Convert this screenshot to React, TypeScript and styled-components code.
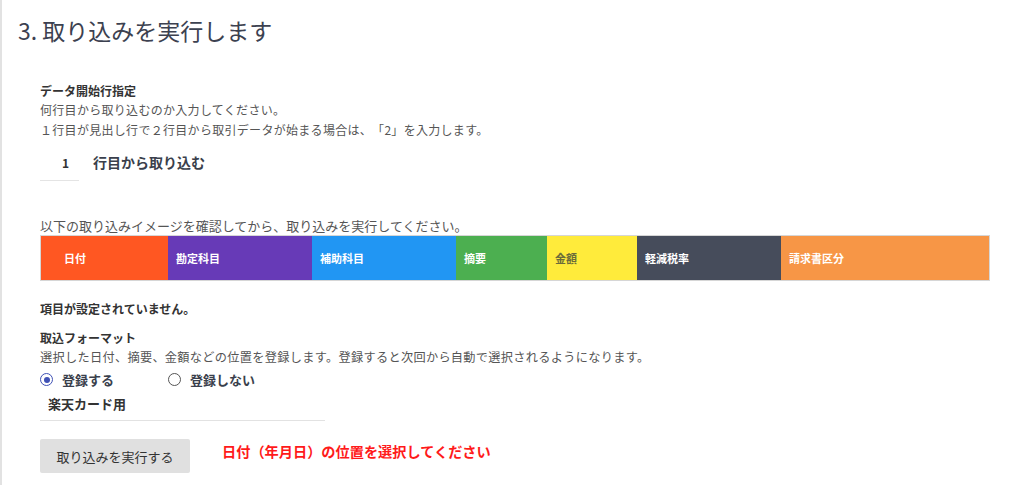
import { useState } from "react";
import styled, { createGlobalStyle } from "styled-components";

const GlobalStyle = createGlobalStyle`
  html, body {
    margin: 0;
    padding: 0;
    background: #ffffff;
  }
  body {
    font-family: "Noto Sans CJK JP", "Noto Sans", sans-serif;
    color: #333;
    text-spacing-trim: space-all;
  }
`;

const Page = styled.div`
  height: 485px;
  border-left: 2px solid #e2e2e2;
  box-sizing: border-box;
  padding: 14px 0 0 16px;
`;

const Title = styled.h1`
  margin: 0;
  font-size: 23px;
  font-weight: 400;
  color: #3c4150;
  line-height: 32px;
`;

const Body = styled.div`
  padding: 36px 0 0 22px;
  width: 950px;
`;

const Label = styled.div`
  font-size: 12px;
  font-weight: 700;
  color: #333;
  line-height: 18px;
`;

const Help = styled.div`
  font-size: 12px;
  letter-spacing: 0.3px;
  color: #555;
  line-height: 20px;
`;

const StartRow = styled.div`
  display: flex;
  align-items: flex-start;
  gap: 14px;
  margin-top: 2px;
`;

const SmallInput = styled.input`
  width: 39px;
  box-sizing: border-box;
  border: none;
  border-bottom: 1px solid #e4e4e4;
  padding: 12px 10px 9px 0;
  text-align: right;
  font-family: inherit;
  font-size: 12px;
  font-weight: 700;
  color: #333;
  outline: none;
`;

const StartLabel = styled.span`
  font-size: 14px;
  font-weight: 700;
  color: #3a3f4c;
  line-height: 20px;
  margin-top: 10px;
`;

const Lead = styled.div`
  margin-top: 35px;
  font-size: 13px;
  color: #555;
  line-height: 19px;
`;

const Bar = styled.div`
  display: flex;
  height: 46px;
  border: 1px solid #d6d6d6;
  box-sizing: border-box;
`;

const Segment = styled.div<{ $bg: string; $fg: string; $w: number; $pad: number }>`
  flex: 0 0 ${(p) => p.$w}px;
  background: ${(p) => p.$bg};
  color: ${(p) => p.$fg};
  display: flex;
  align-items: center;
  padding-left: ${(p) => p.$pad}px;
  box-sizing: border-box;
  font-size: 11px;
  font-weight: 700;
`;

const Notice = styled.div`
  margin-top: 19px;
  font-size: 12px;
  font-weight: 700;
  color: #333;
`;

const FormatBlock = styled.div`
  margin-top: 12px;
`;

const Description = styled(Help)`
  font-size: 12.2px;
`;

const RadioRow = styled.div`
  display: flex;
  gap: 16px;
  margin-top: 3px;
`;

const RadioLabel = styled.label`
  display: flex;
  align-items: center;
  gap: 9px;
  width: 112px;
  font-size: 13px;
  font-weight: 700;
  color: #3a3f4c;
  cursor: pointer;
`;

const RadioDot = styled.span<{ $on: boolean }>`
  width: 13px;
  height: 13px;
  border-radius: 50%;
  box-sizing: border-box;
  border: 1.5px solid ${(p) => (p.$on ? "#3f51b5" : "#555")};
  display: flex;
  align-items: center;
  justify-content: center;
  &::after {
    content: "";
    width: 6px;
    height: 6px;
    border-radius: 50%;
    background: ${(p) => (p.$on ? "#3f51b5" : "transparent")};
  }
`;

const NameInput = styled.input`
  display: block;
  width: 285px;
  box-sizing: border-box;
  margin-top: 0;
  border: none;
  border-bottom: 1.5px solid #e2e2e2;
  padding: 5px 8px 7px;
  font-family: inherit;
  font-size: 13px;
  font-weight: 700;
  color: #333;
  outline: none;
`;

const ActionRow = styled.div`
  display: flex;
  align-items: center;
  gap: 32px;
  margin-top: 18px;
`;

const RunButton = styled.button`
  width: 150px;
  height: 34px;
  background: #e0e0e0;
  border: none;
  border-radius: 2px;
  font-family: inherit;
  font-size: 13px;
  color: #333;
  cursor: pointer;
`;

const ErrorText = styled.span`
  font-size: 14.2px;
  font-weight: 700;
  color: #ff1a1a;
  margin-top: -10px;
`;

const segments = [
  { name: "日付", bg: "#ff5722", fg: "#ffffff", w: 127, pad: 23 },
  { name: "勘定科目", bg: "#673ab7", fg: "#ffffff", w: 144, pad: 8 },
  { name: "補助科目", bg: "#2196f3", fg: "#ffffff", w: 144, pad: 8 },
  { name: "摘要", bg: "#4caf50", fg: "#ffffff", w: 91, pad: 8 },
  { name: "金額", bg: "#ffeb3b", fg: "#6b6b3a", w: 90, pad: 8 },
  { name: "軽減税率", bg: "#464c5b", fg: "#ffffff", w: 144, pad: 8 },
  { name: "請求書区分", bg: "#f79646", fg: "#ffffff", w: 208, pad: 8 },
];

export default function App() {
  const [startRow, setStartRow] = useState("1");
  const [register, setRegister] = useState(true);
  const [name, setName] = useState("楽天カード用");

  return (
    <>
      <GlobalStyle />
      <Page>
        <Title>3. 取り込みを実行します</Title>
        <Body>
          <Label>データ開始行指定</Label>
          <Help>何行目から取り込むのか入力してください。</Help>
          <Help>１行目が見出し行で２行目から取引データが始まる場合は、「2」を入力します。</Help>
          <StartRow>
            <SmallInput value={startRow} onChange={(e) => setStartRow(e.target.value)} />
            <StartLabel>行目から取り込む</StartLabel>
          </StartRow>

          <Lead>以下の取り込みイメージを確認してから、取り込みを実行してください。</Lead>
          <Bar>
            {segments.map((s) => (
              <Segment key={s.name} $bg={s.bg} $fg={s.fg} $w={s.w} $pad={s.pad}>
                {s.name}
              </Segment>
            ))}
          </Bar>

          <Notice>項目が設定されていません。</Notice>

          <FormatBlock>
            <Label>取込フォーマット</Label>
            <Description>選択した日付、摘要、金額などの位置を登録します。登録すると次回から自動で選択されるようになります。</Description>
            <RadioRow>
              <RadioLabel onClick={() => setRegister(true)}>
                <RadioDot $on={register} />
                登録する
              </RadioLabel>
              <RadioLabel onClick={() => setRegister(false)}>
                <RadioDot $on={!register} />
                登録しない
              </RadioLabel>
            </RadioRow>
            <NameInput value={name} onChange={(e) => setName(e.target.value)} />
          </FormatBlock>

          <ActionRow>
            <RunButton>取り込みを実行する</RunButton>
            <ErrorText>日付（年月日）の位置を選択してください</ErrorText>
          </ActionRow>
        </Body>
      </Page>
    </>
  );
}
